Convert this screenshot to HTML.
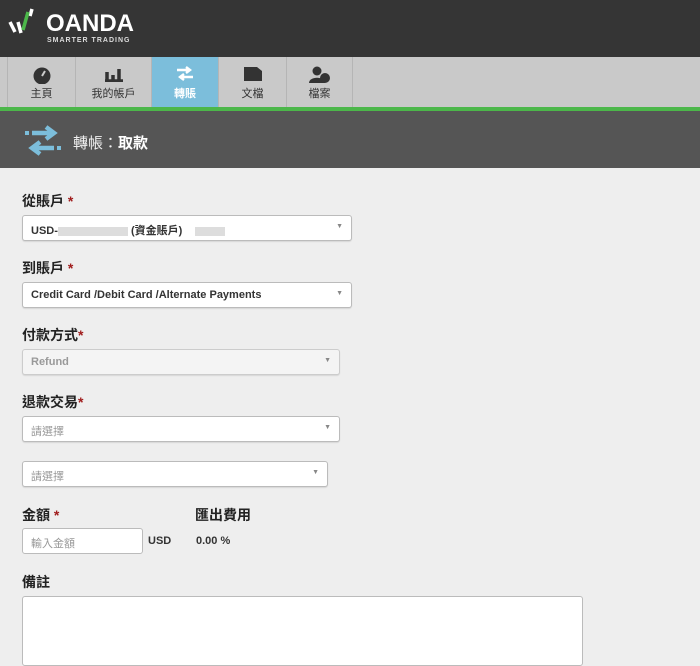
<!DOCTYPE html><html><head><meta charset="utf-8"><style>
*{box-sizing:border-box;margin:0;padding:0}
body{width:700px;height:653px;overflow:hidden;background:#eeeeee;font-family:"Liberation Sans","Noto Sans CJK TC",sans-serif;position:relative}
.hd{position:absolute;left:0;top:0;width:700px;height:57px;background:#353535}
.nav{position:absolute;left:0;top:57px;width:700px;height:50px;background:#c9c9c9}
.it{position:absolute;top:0;height:50px;border-left:1px solid #b5b5b5;text-align:center;font-size:11px;color:#333;padding-top:28px}
.it.a{background:#7cbedb;color:#fff;font-weight:bold}
.ic{position:absolute;left:50%;top:9px;transform:translateX(-50%)}
.gl{position:absolute;left:0;top:107px;width:700px;height:4px;background:#4cb74a}
.sh{position:absolute;left:0;top:111px;width:700px;height:57px;background:#555}
.lb{position:absolute;left:22px;font-size:14px;font-weight:bold;color:#222}
.lb b{color:#a01c1c}
.sel{position:absolute;left:22px;height:26px;background:#fff;border:1px solid #bbb;border-radius:3px;font-size:11px;font-weight:bold;color:#333;padding:6px 8px;box-shadow:0 1px 1px rgba(0,0,0,.1)}
.sel:after{content:"▼";position:absolute;right:8px;top:7px;font-size:7px;color:#888}
.dis{background:#f4f4f4;color:#999;border-color:#ccc}
.ph{color:#999;font-weight:normal}
.noarr:after{content:none}
</style></head><body>
<div class="hd">
<svg style="position:absolute;left:8px;top:8px" width="34" height="30"><path d="M2 14l5 10M10 14l3 11M22 8l2-7" stroke="#fff" stroke-width="3.5"/><path d="M15 22l5-18" stroke="#4cb74a" stroke-width="3.5"/></svg>
<div style="position:absolute;left:46px;top:10px;color:#fff;font-size:24px;font-weight:bold">OANDA</div>
<div style="position:absolute;left:47px;top:37px;color:#ddd;font-size:7px;font-weight:bold;letter-spacing:1px">SMARTER TRADING</div>
</div>
<div class="nav">
<div class="it" style="left:7px;width:68px"><svg class="ic" width="20" height="18"><circle cx="10" cy="10" r="8.5" fill="#333"/><path d="M10 10l3-5" stroke="#ccc" stroke-width="2"/></svg>主頁</div>
<div class="it" style="left:75px;width:76px"><svg class="ic" width="20" height="16"><path d="M1 15h18M3 6v9M9 9v6M15 3v12" stroke="#333" stroke-width="3.5"/></svg>我的帳戶</div>
<div class="it a" style="left:151px;width:67px"><svg class="ic" width="20" height="16"><path d="M2 4h13M11 1l4 3-4 3M18 11H5M9 8l-4 3 4 3" stroke="#fff" stroke-width="2.4" fill="none"/></svg>轉賬</div>
<div class="it" style="left:218px;width:68px"><svg class="ic" width="20" height="16"><path d="M1 1h13l5 4v10H1z" fill="#333"/></svg>文檔</div>
<div class="it" style="left:286px;width:67px;border-right:1px solid #b5b5b5"><svg class="ic" width="22" height="18"><circle cx="8" cy="5" r="4.5" fill="#333"/><path d="M0 17c0-7 16-7 16 0z" fill="#333"/><circle cx="16" cy="12" r="5" fill="#333"/></svg>檔案</div>
</div>
<div class="gl"></div>
<div class="sh">
<svg style="position:absolute;left:24px;top:13px" width="38" height="34"><path d="M8 9h20M22 3l8 6-8 6M30 24H10M16 18l-8 6 8 6" stroke="#7cbedb" stroke-width="4.5" fill="none"/><rect x="1" y="7" width="4" height="4" fill="#7cbedb"/><rect x="33" y="22" width="4" height="4" fill="#7cbedb"/></svg>
<div style="position:absolute;left:73px;top:21px;color:#eee;font-size:15px">轉帳：<b style="color:#fff">取款</b></div>
</div>
<div class="lb" style="top:191px">從賬戶 <b>*</b></div>
<div class="sel" style="top:215px;width:330px">USD-<span style="display:inline-block;width:70px;height:9px;background:#ddd;vertical-align:middle"></span> (資金賬戶) <span style="display:inline-block;width:30px;height:9px;background:#ddd;vertical-align:middle;margin-left:10px"></span></div>
<div class="lb" style="top:258px">到賬戶 <b>*</b></div>
<div class="sel" style="top:282px;width:330px">Credit Card /Debit Card /Alternate Payments</div>
<div class="lb" style="top:325px">付款方式<b>*</b></div>
<div class="sel dis" style="top:349px;width:318px">Refund</div>
<div class="lb" style="top:392px">退款交易<b>*</b></div>
<div class="sel" style="top:416px;width:318px"><span class="ph">請選擇</span></div>
<div class="sel" style="top:461px;width:306px"><span class="ph">請選擇</span></div>
<div class="lb" style="top:505px">金額 <b>*</b></div>
<div class="lb" style="top:505px;left:195px">匯出費用</div>
<div class="sel noarr" style="top:528px;width:121px;box-shadow:none"><span class="ph">輸入金額</span></div>
<div style="position:absolute;left:148px;top:535px;font-size:11px;font-weight:bold;color:#333">USD</div>
<div style="position:absolute;left:196px;top:535px;font-size:11px;font-weight:bold;color:#333">0.00 %</div>
<div class="lb" style="top:572px">備註</div>
<div style="position:absolute;left:22px;top:596px;width:561px;height:70px;background:#fff;border:1px solid #bbb;border-radius:3px"></div>
</body></html>
